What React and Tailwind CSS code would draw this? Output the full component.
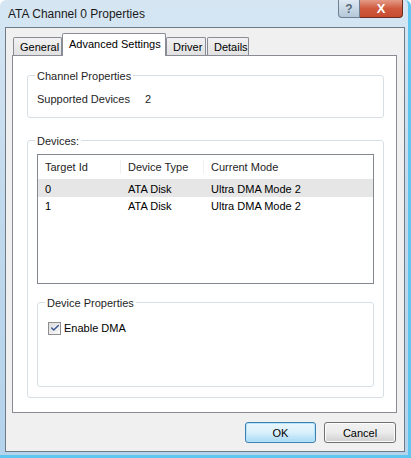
import { Check } from 'lucide-react';

const rows = [
  { id: '0', type: 'ATA Disk', mode: 'Ultra DMA Mode 2', selected: true },
  { id: '1', type: 'ATA Disk', mode: 'Ultra DMA Mode 2', selected: false },
];

// Group box with the caption sitting on the top border
const GroupBox = ({ label, className = '', children }) => (
  <div className={`relative border border-[#d5dfe5] rounded-[3px] ${className}`}>
    <span className="absolute -top-[7px] left-[7px] bg-white px-[2px] leading-[14px] text-[#1e1e1e]">
      {label}
    </span>
    {children}
  </div>
);

const Tab = ({ label, active, className = '' }) =>
  active ? (
    <div
      className={`relative z-10 h-[23px] -mb-[1px] bg-white border border-b-0 border-[#898c95] rounded-t-[2px] whitespace-nowrap ${className}`}
    >
      {label}
    </div>
  ) : (
    <div
      className={`h-[18px] mt-[4px] px-[6px] pt-[2px] bg-gradient-to-b from-[#f2f2f2] to-[#e1e1e1] border border-b-0 border-[#898c95] rounded-t-[2px] whitespace-nowrap ${className}`}
    >
      {label}
    </div>
  );

export default function App() {
  return (
    <div
      className="w-[411px] h-[458px] flex flex-col text-[11px] text-black bg-gradient-to-b from-[#d6e6f3] via-[#bfd8ec] to-[#b4d3ec] border-r-[3px] border-b-[3px] border-[#5fc6ef] rounded-t-[6px] overflow-hidden"
      style={{ fontFamily: '"Liberation Sans", Arial, sans-serif' }}
    >
      {/* Title bar */}
      <div className="h-[27px] flex items-start shrink-0">
        <div className="pl-[8px] pt-[7px] text-[12px] leading-[14px] text-[#1b1b1b]">ATA Channel 0 Properties</div>
        <div className="ml-auto mr-[5px] flex">
          <div className="w-[22px] h-[18px] border border-[#6d7f91] border-t-0 rounded-bl-[4px] bg-gradient-to-b from-[#dfe9f3] to-[#b4c7d9] flex items-center justify-center text-[12px] font-bold text-[#5a6b7c]">
            ?
          </div>
          <div className="w-[43px] h-[18px] border border-[#6b2d22] border-t-0 border-l-0 rounded-br-[4px] bg-gradient-to-b from-[#e49a86] via-[#cf5a3e] to-[#c84a2f] flex items-center justify-center text-[13px] font-bold text-white">
            X
          </div>
        </div>
      </div>

      {/* Client area */}
      <div className="ml-[5px] w-[400px] h-[425px] border border-[#6e7a86] bg-[#f0f0f0] flex flex-col">
        {/* Tabs */}
        <div className="flex items-start pl-[7px] pt-[5px] h-[27px] leading-[14px]">
          <Tab label="General" className="w-[49px] mr-[1px]" />
          <Tab label="Advanced Settings" active className="w-[104px] -mx-[1px] px-[6px] pt-[3px]" />
          <Tab label="Driver" className="w-[40px] ml-[1px]" />
          <Tab label="Details" className="w-[42px] ml-[1px]" />
        </div>

        {/* Tab page */}
        <div className="ml-[6px] w-[385px] h-[358px] bg-white border border-[#898c95] pl-[14px] pr-[12px] pt-[19px]">
          <GroupBox label="Channel Properties" className="h-[43px]">
            <div className="flex pl-[9px] pt-[16px] leading-[14px] text-[#1e1e1e]">
              <span className="w-[108px]">Supported Devices</span>
              <span>2</span>
            </div>
          </GroupBox>

          <GroupBox label="Devices:" className="mt-[22px] h-[258px] px-[9px] pt-[13px]">
            {/* List view */}
            <div className="h-[130px] border border-[#828790] bg-white">
              <div className="flex h-[25px] items-center border-b border-[#e5e5e5] text-[#1e1e1e] leading-[14px]">
                <span className="w-[83px] pl-[7px] border-r border-[#f0f0f0]">Target Id</span>
                <span className="w-[83px] pl-[7px] border-r border-[#f0f0f0]">Device Type</span>
                <span className="pl-[7px]">Current Mode</span>
              </div>
              {rows.map((r) => (
                <div
                  key={r.id}
                  className={`flex h-[17px] items-center leading-[14px] ${r.selected ? 'bg-[#e6e6e6]' : ''}`}
                >
                  <span className="w-[83px] pl-[7px]">{r.id}</span>
                  <span className="w-[83px] pl-[7px]">{r.type}</span>
                  <span className="pl-[7px]">{r.mode}</span>
                </div>
              ))}
            </div>

            <GroupBox label="Device Properties" className="mt-[18px] h-[85px]">
              <label className="flex items-center gap-[3px] pl-[10px] pt-[18px] leading-[14px]">
                <span className="w-[13px] h-[13px] border border-[#8f8f8f] bg-gradient-to-br from-[#dcdcdc] to-[#fafafa] flex items-center justify-center">
                  <Check size={10} strokeWidth={3.5} className="text-[#3a5a93]" />
                </span>
                <span>Enable DMA</span>
              </label>
            </GroupBox>
          </GroupBox>
        </div>

        {/* Buttons */}
        <div className="flex justify-end gap-[8px] pr-[8px] pt-[9px]">
          <button className="w-[71px] h-[21px] rounded-[3px] border border-[#3c7fb1] bg-gradient-to-b from-[#eaf6fd] via-[#d9f0fc] to-[#a7d9f5] shadow-[inset_0_0_0_1px_#b6e4fa] leading-[14px]">
            OK
          </button>
          <button className="w-[72px] h-[21px] rounded-[3px] border border-[#707070] bg-gradient-to-b from-[#f2f2f2] via-[#ebebeb] to-[#cfcfcf] shadow-[inset_0_0_0_1px_#fcfcfc] leading-[14px]">
            Cancel
          </button>
        </div>
      </div>
    </div>
  );
}
